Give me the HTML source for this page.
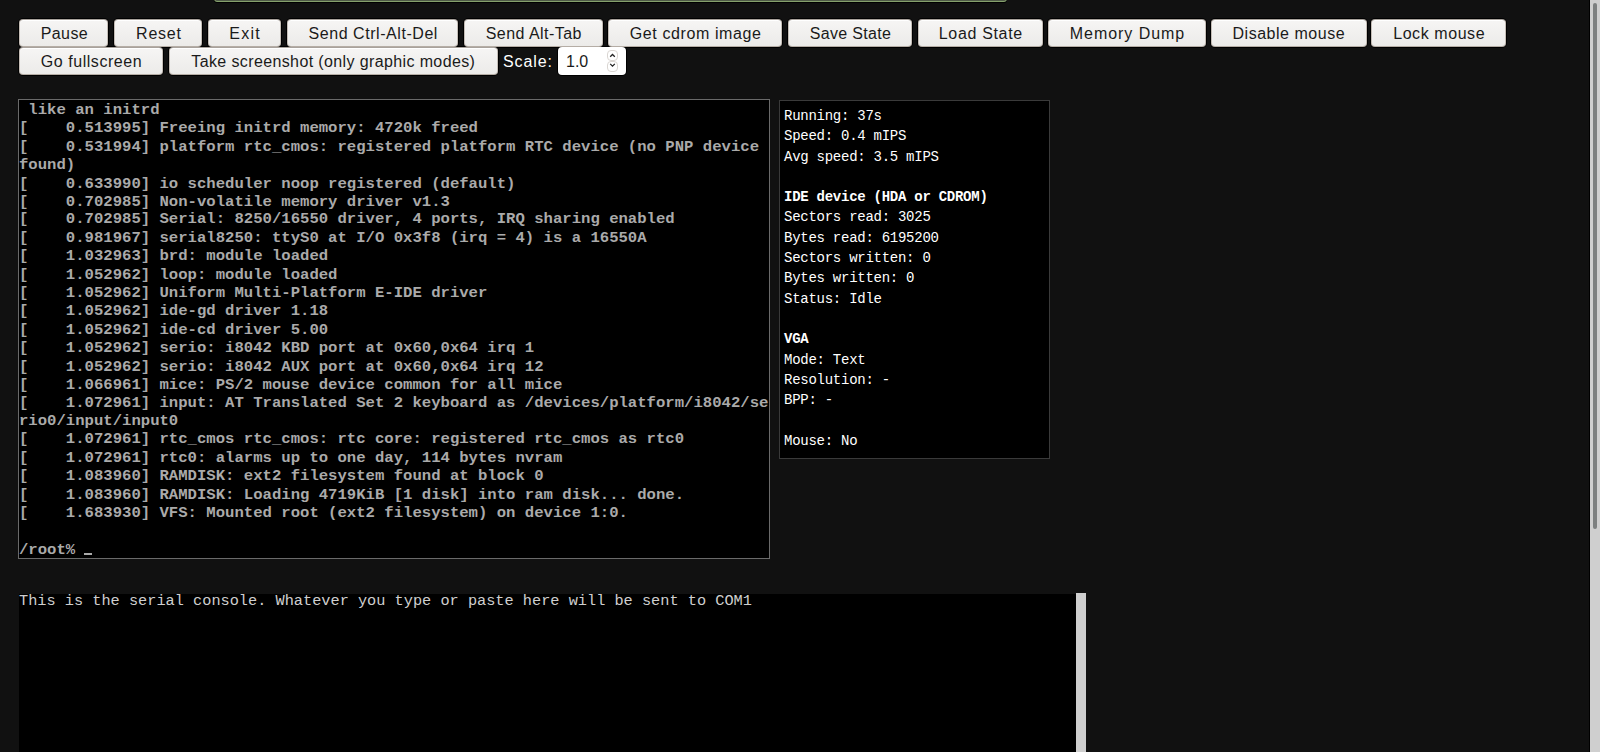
<!DOCTYPE html>
<html>
<head>
<meta charset="utf-8">
<style>
html,body{margin:0;padding:0;}
body{background:#111;width:1600px;height:752px;overflow:hidden;position:relative;font-family:"Liberation Sans",sans-serif;}
.topbox{position:absolute;left:214px;top:-38px;width:793px;height:40px;border:1px solid #85a06c;border-radius:3px;box-sizing:border-box;background:#4f5b47;box-shadow:0 1px 0 #000;}
.btn{position:absolute;height:28px;box-sizing:border-box;border:1px solid #c4bdb6;border-top-color:#a8a29c;border-bottom-color:#b5ada5;border-radius:4px;background:linear-gradient(#f6f5f4,#ecebe9);color:#1a1a1a;font-size:16px;line-height:27px;padding-top:0px;text-align:left;white-space:nowrap;box-shadow:inset 0 1px 0 #fff;}
.btn::before{content:"";position:absolute;left:-2px;top:-2px;right:-2px;bottom:-2px;background:#000;border-radius:5px;z-index:-1;}
.r1{top:19px;}
.r2{top:47px;}
.lbl{position:absolute;left:503px;top:48px;height:28px;line-height:28px;color:#fff;font-size:16px;letter-spacing:0.9px;}
.num{position:absolute;left:558px;top:47px;width:68px;height:28px;box-sizing:border-box;background:#fff;border-radius:4px;}
.num::before{content:"";position:absolute;left:-1px;top:-1px;right:-1px;bottom:-1px;background:#000;border-radius:5px;z-index:-1;}
.num .v{position:absolute;left:8px;top:1px;line-height:28px;font-size:16px;color:#1a1a1a;}
.spin{position:absolute;left:49px;width:11px;height:11px;box-sizing:border-box;border:1px solid #dad6d2;border-radius:4px;}
.spin svg{position:absolute;left:0;top:0;}
.vga{position:absolute;left:18px;top:99px;width:752px;height:460px;box-sizing:border-box;border:1px solid #6a6a6a;background:#000;overflow:hidden;}
.vga pre{margin:0;position:absolute;left:0;top:2.4px;transform:scaleY(0.92);transform-origin:0 0;font-family:"Liberation Mono",monospace;font-weight:bold;font-size:15.625px;line-height:19.913px;color:#aaa;white-space:pre;}
.cur{position:absolute;left:65px;top:453px;width:8px;height:2px;background:#aaa;}
.info{position:absolute;left:779px;top:100px;width:271px;height:359px;box-sizing:border-box;border:1px solid #3a3a3a;background:#000;color:#fff;font-family:"Liberation Mono",monospace;font-size:14px;letter-spacing:-0.26px;line-height:20.3px;padding:5px 4px;white-space:pre;}
.serial{position:absolute;left:19px;top:594px;width:1057px;height:200px;background:#000;color:#cfcfcf;font-family:"Liberation Mono",monospace;font-size:15.27px;line-height:15px;white-space:pre;}
.strough{position:absolute;left:1076px;top:593px;width:10px;height:200px;background:#cfcfcf;}
.sb{position:absolute;left:1590px;top:0;width:10px;height:752px;background:#cfcfcf;}
.sbline{position:absolute;left:1589px;top:0;width:1px;height:752px;background:#000;}
.thumb{position:absolute;left:1593px;top:3px;width:4px;height:526px;background:#7d8080;border-radius:2px;}
</style>
</head>
<body>
<div class="topbox"></div>
<div class="btn r1" style="left:19px;width:89px;letter-spacing:0.375px;padding-left:20.80px">Pause</div>
<div class="btn r1" style="left:114.4px;width:88.1px;letter-spacing:0.750px;padding-left:20.70px">Reset</div>
<div class="btn r1" style="left:207.5px;width:73.75px;letter-spacing:1.250px;padding-left:20.80px">Exit</div>
<div class="btn r1" style="left:286.9px;width:171.2px;letter-spacing:0.553px;padding-left:20.65px">Send Ctrl-Alt-Del</div>
<div class="btn r1" style="left:464.4px;width:138.7px;letter-spacing:0.464px;padding-left:20.30px">Send Alt-Tab</div>
<div class="btn r1" style="left:608.1px;width:174.4px;letter-spacing:0.600px;padding-left:20.70px">Get cdrom image</div>
<div class="btn r1" style="left:788.1px;width:123.8px;letter-spacing:0.306px;padding-left:20.70px">Save State</div>
<div class="btn r1" style="left:917.5px;width:125px;letter-spacing:0.667px;padding-left:20.30px">Load State</div>
<div class="btn r1" style="left:1048.1px;width:157.5px;letter-spacing:0.950px;padding-left:20.70px">Memory Dump</div>
<div class="btn r1" style="left:1210.6px;width:156.3px;letter-spacing:0.521px;padding-left:20.95px">Disable mouse</div>
<div class="btn r1" style="left:1371.25px;width:134.35px;letter-spacing:0.567px;padding-left:20.95px">Lock mouse</div>
<div class="btn r2" style="left:19px;width:144.25px;letter-spacing:0.542px;padding-left:20.80px">Go fullscreen</div>
<div class="btn r2" style="left:169.25px;width:328.25px;letter-spacing:0.379px;padding-left:21.05px">Take screenshot (only graphic modes)</div>
<div class="lbl">Scale:</div>
<div class="num"><span class="v">1.0</span><div class="spin" style="top:3px;height:11px"><svg width="9" height="9" viewBox="0 0 9 9"><path d="M2.2 5.7 L4.5 3.5 L6.8 5.7" fill="none" stroke="#222" stroke-width="1.3"/></svg></div><div class="spin" style="top:14px;height:11px"><svg width="9" height="9" viewBox="0 0 9 9"><path d="M2.2 1.9 L4.5 4.2 L6.8 1.9" fill="none" stroke="#222" stroke-width="1.3"/></svg></div></div>

<div class="vga"><pre> like an initrd
[    0.513995] Freeing initrd memory: 4720k freed
[    0.531994] platform rtc_cmos: registered platform RTC device (no PNP device 
found)
[    0.633990] io scheduler noop registered (default)
[    0.702985] Non-volatile memory driver v1.3
[    0.702985] Serial: 8250/16550 driver, 4 ports, IRQ sharing enabled
[    0.981967] serial8250: ttyS0 at I/O 0x3f8 (irq = 4) is a 16550A
[    1.032963] brd: module loaded
[    1.052962] loop: module loaded
[    1.052962] Uniform Multi-Platform E-IDE driver
[    1.052962] ide-gd driver 1.18
[    1.052962] ide-cd driver 5.00
[    1.052962] serio: i8042 KBD port at 0x60,0x64 irq 1
[    1.052962] serio: i8042 AUX port at 0x60,0x64 irq 12
[    1.066961] mice: PS/2 mouse device common for all mice
[    1.072961] input: AT Translated Set 2 keyboard as /devices/platform/i8042/se
rio0/input/input0
[    1.072961] rtc_cmos rtc_cmos: rtc core: registered rtc_cmos as rtc0
[    1.072961] rtc0: alarms up to one day, 114 bytes nvram
[    1.083960] RAMDISK: ext2 filesystem found at block 0
[    1.083960] RAMDISK: Loading 4719KiB [1 disk] into ram disk... done.
[    1.683930] VFS: Mounted root (ext2 filesystem) on device 1:0.

/root% </pre><div class="cur"></div></div>

<div class="info">Running: 37s
Speed: 0.4 mIPS
Avg speed: 3.5 mIPS

<b>IDE device (HDA or CDROM)</b>
Sectors read: 3025
Bytes read: 6195200
Sectors written: 0
Bytes written: 0
Status: Idle

<b>VGA</b>
Mode: Text
Resolution: -
BPP: -

Mouse: No</div>

<div class="serial">This is the serial console. Whatever you type or paste here will be sent to COM1</div>
<div class="strough"></div>

<div class="sbline"></div>
<div class="sb"></div>
<div class="thumb"></div>
</body>
</html>
